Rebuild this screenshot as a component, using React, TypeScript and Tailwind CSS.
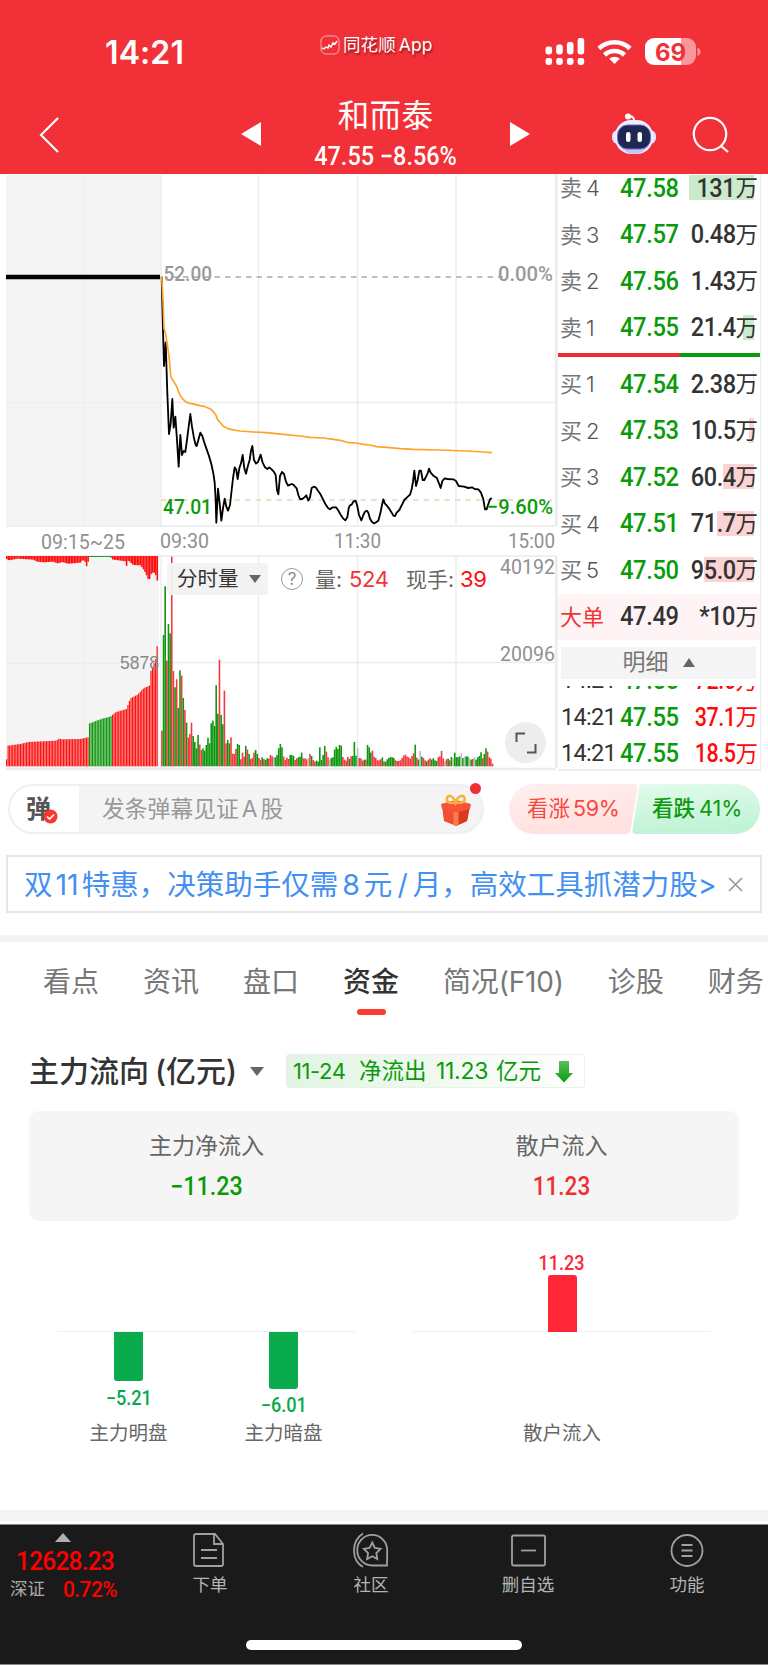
import { Fragment } from 'react'
import type { ReactNode } from 'react'
import clsx from 'clsx'

type Side = 'r' | 'g' | 'n'

const BAR_COLORS: Record<Side, string> = { r: '#f03c40', g: '#0f970f', n: '#bdbdbd' }

// 分时走势：上午 / 下午两段，单位 1/3 px
const PRICE_AM =
  '35,50 39,210 42,318 47,247 52,400 57,522 62,490 67,417 71,503 76,470 81,540 86,620 91,525 96,585 101,573 106,576 111,540 116,500 121,462 126,500 132,535 137,555 140,558 145,540 151,518 157,528 163,548 170,568 177,588 184,612 190,640 194,668 197,720 199,788 204,686 209,730 214,782 219,745 224,716 229,740 234,752 240,735 245,690 249,655 254,622 259,630 263,657 268,625 273,610 278,585 283,625 288,641 293,620 299,600 303,572 307,558 312,600 318,611 324,606 332,584 338,608 345,622 352,627 358,622 365,628 372,636 377,645 381,690 385,703 390,648 396,636 402,642 408,665 414,677 420,674 426,672 432,676 440,685 445,705 450,717 457,717 463,712 469,706 475,722 480,712 485,684 491,680 498,683 504,692 511,702 518,716 526,732 534,744 540,748 548,742 558,742 564,750 572,764 580,776 586,781 592,772 596,745 600,735'
const PRICE_PM =
  '30,315 35,314 40,305 47,302 52,318 57,345 64,361 70,345 75,335 80,332 85,338 90,356 96,366 102,370 108,367 115,362 121,340 126,315 130,298 134,310 140,316 147,325 155,338 160,347 165,348 170,338 178,330 186,314 193,300 201,292 210,284 215,268 219,245 223,212 228,258 233,240 238,212 243,212 248,240 253,240 258,230 263,220 267,206 272,218 280,227 290,233 296,248 302,264 307,243 314,235 322,237 340,238 348,243 356,258 372,260 385,264 396,262 404,267 415,268 423,278 430,298 435,328 440,328 444,315 450,298 455,294'
const AVG_AM =
  '35,50 39,120 42,205 47,222 52,255 57,290 60,320 62,348 66,357 73,367 80,380 85,393 92,409 101,420 110,427 120,430 135,433 150,437 165,440 180,446 190,455 198,466 204,481 212,489 220,499 232,505 245,509 270,513 310,516 350,518 400,523 450,528 480,532 520,534 550,538 575,542 590,547 600,548'
const AVG_PM =
  '30,128 50,129 70,133 90,135 110,140 140,142 180,146 220,148 300,150 380,153 430,156 456,158'

// 每分钟成交量，颜色 + 高度(1/3 px)
const VOLUMES =
  'r107 g394 g540 r317 g427 g399 r629 r286 g237 r261 g175 g288 r272 g205 r169 g131 r86 r97 r131 g91 g73 g54 g94 r65 r49 g54 g47 g64 g86 g69 g129 g137 g121 g243 g158 r320 g154 g126 r227 r69 g79 g69 r87 r38 r37 r52 g67 g64 r21 r41 r29 g61 r50 g37 r22 r25 r41 g49 g37 r25 r19 g27 r22 g19 g24 r23 r34 r30 n28 g27 g34 g54 g67 g57 r29 r19 r26 r22 g34 g34 g31 r19 r24 g27 g29 g41 r24 r24 r21 n25 r37 g31 r19 r14 g17 g14 g57 g19 g34 g61 r44 r27 n20 g25 g27 g50 g58 g52 g64 g62 r28 r20 r17 r28 g22 r30 g31 g73 g32 n54 r25 r24 r17 g20 r20 g64 g57 g41 r47 r29 r25 r18 r18 r21 g27 r15 g14 g21 g25 g28 g27 g25 r18 r16 r16 r18 r25 r32 r35 r29 r27 r23 r31 r39 g65 r26 g20 n46 g29 r25 r18 g15 r20 r24 g20 g24 g18 g16 r27 r30 r46 r24 n16 r21 g23 r18 g28 n24 g41 g28 g27 g30 n39 g25 n29 g30 g29 n24 g20 r22 n28 g20 g27 g31 g42 r24 g37 g54 r44 r27 r23 r8'
    .split(' ')
    .map((s) => ({ side: s[0] as Side, h: Number(s.slice(1)) / 3 }))

// 集合竞价关键点 [x, 高度]
const PRE_BOTTOM = [[6, 21], [7.5, 62], [20, 67], [28, 73], [56, 77], [58.6, 84], [60.5, 81], [80, 82], [87.5, 87], [88, 128], [92, 132], [97, 138], [103, 144], [110, 149], [111, 152], [115, 162], [126, 172], [128, 190], [130, 204], [137, 215], [143, 234], [149, 242], [150, 284], [153, 305], [155.5, 326], [156.6, 363], [159, 373]]
const PRE_TOP = [[6, 9], [8, 13], [17, 8], [33, 11], [36, 17], [43, 19], [52, 17], [57, 22], [62, 18], [67, 23], [80, 20], [82, 11], [85, 19], [86.5, 39], [88, 3], [110, 3], [111.5, 10], [118, 13], [125, 16], [125.7, 31], [127.5, 13], [132.5, 27], [140, 28], [144, 46], [148.3, 75], [150.5, 53], [153, 48], [155.3, 59], [157.5, 85]]

function sample(points: number[][], x: number) {
  for (let i = 1; i < points.length; i++) {
    const [x1, y1] = points[i]
    const [x0, y0] = points[i - 1]
    if (x <= x1) return (y0 + ((y1 - y0) * (x - x0)) / (x1 - x0)) / 3
  }
  return points[points.length - 1][1] / 3
}

const PRE_BARS = Array.from({ length: 99 }, (_, i) => 6 + i * 1.536)

const ASKS = [
  { label: '4', price: '47.58', vol: '131', bar: 'w-[65px]' },
  { label: '3', price: '47.57', vol: '0.48', bar: 'w-0' },
  { label: '2', price: '47.56', vol: '1.43', bar: 'w-0' },
  { label: '1', price: '47.55', vol: '21.4', bar: 'w-[11px]' },
]
const BIDS = [
  { label: '1', price: '47.54', vol: '2.38', bar: 'w-px' },
  { label: '2', price: '47.53', vol: '10.5', bar: 'w-[5px]' },
  { label: '3', price: '47.52', vol: '60.4', bar: 'w-[31px]' },
  { label: '4', price: '47.51', vol: '71.7', bar: 'w-[37px]' },
  { label: '5', price: '47.50', vol: '95.0', bar: 'w-[50px]' },
]
const TRADES = ['72.6', '37.1', '18.5']
const TABS = ['看点', '资讯', '盘口', '资金', '简况(F10)', '诊股', '财务']

function Label({ x, y, w, size = 21, fill = '#999', weight = 400, font = 'Roboto', children }: {
  x: number
  y: number
  w: number
  size?: number
  fill?: string
  weight?: number
  font?: string
  children: string
}) {
  return (
    <text x={x} y={y} textLength={w} lengthAdjust="spacingAndGlyphs" fontSize={size} fill={fill} fontWeight={weight} fontFamily={font}>
      {children}
    </text>
  )
}

function StatusBar() {
  return (
    <div className="flex h-[103px] items-start">
      <div className="ml-[105px] mt-[37px] w-[215px] font-[Inter] text-[32px] font-semibold leading-[32px] tracking-[0.1px]">14:21</div>
      <div className="mt-[33px] flex h-[24px] w-[225px] items-center gap-[3px]">
        <svg width="20" height="20" viewBox="0 0 20 20" fill="none" stroke="#fff">
          <rect x="1" y="1" width="18" height="18" rx="5" strokeOpacity=".6" />
          <path d="M2 13l2 1 2-2 2 1 1-3 2 2 2-4 2 1 2-3" strokeWidth="1.4" />
        </svg>
        <span className="text-[17.5px] leading-none tracking-[0.1px] [text-shadow:1px_2px_2px_rgba(90,0,0,0.6)]">同花顺<span className="ml-[3px]">App</span></span>
      </div>
      <svg className="mt-[38px]" width="158" height="28" viewBox="545 38 158 28" fill="#fff">
        {[0, 1, 2, 3].map((i) => (
          <Fragment key={i}>
            <rect x={545.5 + i * 10.7} y={[46.5, 44.5, 42, 38][i]} width="6.6" height={[8, 10, 12.5, 16.5][i]} rx="2.4" />
            <rect x={545.5 + i * 10.7} y="58" width="6.6" height="7" rx="2.4" />
          </Fragment>
        ))}
        <g fill="none" stroke="#fff" strokeWidth="4.6">
          <path d="M599 48.5a22.5 22.5 0 0 1 31 0" />
          <path d="M604.5 55a14.5 14.5 0 0 1 20 0" />
        </g>
        <path d="M614.5 64l-5.3-5.2a7.6 7.6 0 0 1 10.6 0z" />
        <path d="M654 38h27v27h-27a9 9 0 0 1-9-9v-9a9 9 0 0 1 9-9z" />
        <path d="M681 38h6a9 9 0 0 1 9 9v9a9 9 0 0 1-9 9h-6z" fillOpacity=".5" />
        <path d="M697.5 47.500c4 1.500 4 7 0 8.500z" fillOpacity=".5" />
        <text x="655" y="60.500" textLength="31" fontSize="24" fontWeight="700" fontFamily="Inter" fill="#f23038">69</text>
      </svg>
    </div>
  )
}

function TitleBar() {
  return (
    <div className="flex h-[71px] items-start">
      <svg className="ml-[38px] mt-[12px]" width="22" height="40" viewBox="0 0 22 40" fill="none" stroke="#fff" strokeWidth="2.2">
        <path d="M20 3L3 20l17 17" />
      </svg>
      <svg className="ml-[181px] mt-[19px]" width="20" height="24" fill="#fff"><path d="M20 0v24L0 12z" /></svg>
      <div className="flex w-[249px] flex-col items-center">
        <h1 className="mt-[-4px] text-[31.5px] leading-[34px] tracking-[0.3px]">和而泰</h1>
        <div className="mt-[10px] scale-x-92 whitespace-pre font-[Roboto] text-[25.5px] font-medium leading-[26px]">47.55 −8.56%</div>
      </div>
      <svg className="mt-[19px]" width="20" height="24" fill="#fff"><path d="M0 0v24l20-12z" /></svg>
      <svg className="ml-[82px] mt-[10px]" width="44" height="42" viewBox="0 0 44 42">
        <path d="M16 3.500q7-1 6 6" fill="none" stroke="#f4f6ff" strokeWidth="2.200" />
        <circle cx="16" cy="3.500" r="3" fill="#fff" />
        <rect x="0" y="17" width="44" height="14" rx="6" fill="#dfe5fb" />
        <rect x="3" y="7" width="38" height="34" rx="16" fill="#eceffd" />
        <path d="M7 32q6 9 15 9t15-9z" fill="#c3c7ee" />
        <rect x="5.500" y="12" width="33" height="24" rx="10" fill="#1f2850" stroke="#7b62d9" strokeWidth="1" />
        <rect x="14" y="19" width="4.500" height="10" rx="2.200" fill="#fff" />
        <rect x="25.500" y="19" width="4.500" height="10" rx="2.200" fill="#fff" />
      </svg>
      <svg className="ml-[36px] mt-[13px]" width="38" height="38" viewBox="0 0 38 38" fill="none" stroke="#fff" strokeWidth="2.2">
        <circle cx="18" cy="18" r="16.200" />
        <path d="M28.500 29.500L36 36" />
      </svg>
    </div>
  )
}

function TrendChart() {
  return (
    <svg className="block" width="558" height="597" viewBox="0 174 558 597">
      <rect x="6" y="175" width="155" height="350" fill="#f4f4f4" />
      <rect x="6" y="556" width="153" height="212" fill="#f4f4f4" />
      <g stroke="#ececec" strokeWidth="1.300">
        <path d="M161 175v351M258.500 175v351M357.500 175v351M456 175v351M161 402.500h395M6 526h550" />
        <path d="M161 556v212M258.500 556v212M357.500 556v212M456 556v212M161 662.500h395M6 556h550" />
        <path d="M84 175v351M6 402.500h155M84 556v212M6 663.500h155" strokeDasharray="2 2" strokeWidth="1" stroke="#e8e8e8" />
      </g>
      <path d="M556.300 174v352M556.300 556v212M6 769h550" stroke="#ececec" strokeWidth="2.500" />
      <path d="M165 277h338" stroke="#aaa" strokeWidth="1.600" strokeDasharray="5.500 5" strokeDashoffset="3" />
      <path d="M161 500h391" stroke="#ecd3b4" strokeWidth="1.500" strokeDasharray="5.500 5" />
      <path d="M6 277h154" stroke="#000" strokeWidth="4.600" />
      <g fill="none" strokeLinejoin="round" strokeWidth="5.500">
        <g transform="translate(150 260) scale(.33333)">
          <polyline points={PRICE_AM} stroke="#000" />
          <polyline points={AVG_AM} stroke="#ffa326" strokeWidth="5" />
        </g>
        <g transform="translate(340 400) scale(.33333)">
          <polyline points={PRICE_PM} stroke="#000" />
          <polyline points={AVG_PM} stroke="#ffa326" strokeWidth="5" />
        </g>
      </g>
      <Label x={163.500} y={281} w={48.500} weight={500}>52.00</Label>
      <Label x={498} y={281} w={55} weight={500}>0.00%</Label>
      <Label x={163} y={514} w={49} fill="#0a9b0a" weight={500}>47.01</Label>
      <Label x={487} y={514} w={66} fill="#0a9b0a" weight={500}>−9.60%</Label>

      <Label x={41} y={549} w={84} fill="#909090">09:15~25</Label>
      <Label x={160} y={547.500} w={49} fill="#909090">09:30</Label>
      <Label x={334} y={547.500} w={47} fill="#909090">11:30</Label>
      <Label x={508} y={547.500} w={47} fill="#909090">15:00</Label>

      {PRE_BARS.map((x) => {
        const green = x > 87.500 && x < 111
        const top = sample(PRE_TOP, x)
        const h = sample(PRE_BOTTOM, x)
        const fill = green ? '#109710' : x > 157.500 ? '#aaa' : '#ff1010'
        return (
          <g key={x} fill={fill}>
            <rect x={x} y={556} width={1.536} height={top} fill={x > 157.500 ? '#ff1010' : fill} />
            <rect x={x} y={766.300 - h} width={1.200} height={h} />
          </g>
        )
      })}
      {VOLUMES.map((v, i) => (
        <rect key={i} x={161.100 + i * 1.645} y={766.300 - v.h} width={1.600} height={v.h} fill={BAR_COLORS[v.side]} />
      ))}
      <Label x={120} y={669} w={39} size={17.500} fill="#888" font="Liberation Sans">5878</Label>
      <Label x={500} y={573.500} w={55} fill="#909090">40192</Label>
      <Label x={500} y={661} w={55} fill="#909090">20096</Label>
    </svg>
  )
}

function QuotePane() {
  return (
    <div className="relative w-[558px] shrink-0">
      <TrendChart />
      <div className="absolute left-[167px] top-[389px] flex h-[32px] items-center text-[21px] leading-none text-[#666]">
        <div className="flex h-[32px] w-[101px] items-center gap-[11px] rounded-[3px] bg-[#f2f2f2]/95 pl-[10px] text-[#333]">
          <span className="w-[64px] text-[20.5px]">分时量</span>
          <svg className="ml-[-3px]" width="12" height="8" fill="#666"><path d="M0 0h12L6 8z" /></svg>
        </div>
        <span className="ml-[13px] flex size-[22px] items-center justify-center rounded-full border-[1.5px] border-[#999] text-[17px] text-[#888]">?</span>
        <span className="ml-[12px] w-[34px]">量:</span>
        <span className="w-[57px] font-[Inter] text-[22px] tracking-[-0.4px] text-[#f03538]">524</span>
        <span className="w-[54px]">现手:</span>
        <span className="font-[Inter] text-[22px] tracking-[-0.4px] text-[#ff0a0a]">39</span>
      </div>
      <div className="absolute left-[505px] top-[548px] flex size-[41px] items-center justify-center rounded-full bg-[#ededed]">
        <svg width="22" height="22" fill="none" stroke="#555" strokeWidth="2"><path d="M10 1.500H1.500V10M12 20.500h8.500V12" /></svg>
      </div>
    </div>
  )
}

function Price({ children, className }: { children: ReactNode; className: string }) {
  return <span className={clsx('inline-block origin-left scale-x-95 font-[Roboto] text-[25px] font-medium tracking-[-0.4px]', className)}>{children}</span>
}

function BookRow({ kind, row }: { kind: '卖' | '买'; row: (typeof ASKS)[number] }) {
  return (
    <div className="relative flex h-[46.500px] shrink-0 items-center pl-[2px] leading-none">
      <div className={clsx('absolute right-[6px] top-[10px] h-[25px]', row.bar, kind === '卖' ? 'bg-[#cbeacb]' : 'bg-[#fbd3d4]')} />
      <span className="w-[26px] text-[22px] text-[#777]">{kind}</span>
      <span className="w-[34px] font-[Inter] text-[22px] font-light text-[#555]">{row.label}</span>
      <Price className="text-[#0a9b0a]">{row.price}</Price>
      <Volume value={row.vol} className="text-[#333]" />
    </div>
  )
}

function Volume({ value, className, narrow }: { value: string; className?: string; narrow?: boolean }) {
  return (
    <span className={clsx('absolute right-[2px] flex items-center leading-none', className)}>
      <span className={clsx('inline-block origin-right font-[Roboto] text-[25px] tracking-[-0.5px]', narrow ? 'scale-x-86 font-medium' : 'scale-x-94 font-medium')}>{value}</span>
      <span className="text-[22.5px]">万</span>
    </span>
  )
}

function OrderBook() {
  return (
    <div className="flex h-[597px] w-[203px] flex-col overflow-hidden border-b-2 border-r border-[#ececec]">
      <div className="mt-[-9px]">
        {ASKS.map((row) => <BookRow key={row.label} kind="卖" row={row} />)}
      </div>
      <div className="mt-[2px] flex h-[3.500px] shrink-0">
        <div className="w-[122px] bg-[#f02c30]" />
        <div className="flex-1 bg-[#0a9b0a]" />
      </div>
      <div className="mt-[4.500px]">
        {BIDS.map((row) => <BookRow key={row.label} kind="买" row={row} />)}
      </div>
      <div className="relative flex h-[46.500px] shrink-0 items-center bg-[#fff4f5] pl-[2px] leading-none">
        <span className="w-[60px] text-[22px] text-[#f03538]">大单</span>
        <Price className="text-[#333]">47.49</Price>
        <Volume value="*10" className="text-[#333]" />
      </div>
      <div className="ml-[3px] mr-[4px] mt-[6.500px] flex h-[32px] shrink-0 items-center justify-center gap-[14px] bg-[#f4f4f4] text-[23px] leading-none text-[#777]">
        明细
        <svg width="12" height="9" fill="#666"><path d="M0 9h12L6 0z" /></svg>
      </div>
      <div className="mt-[7px] flex flex-1 flex-col justify-end overflow-hidden">
        {TRADES.map((vol) => (
          <div key={vol} className="relative flex h-[36.500px] shrink-0 items-center pl-[3px] leading-none last:mb-[-3px]">
            <span className="w-[59px] font-[Roboto] text-[23.500px] tracking-[-0.7px] text-[#333]">14:21</span>
            <Price className="text-[#0a9b0a]">47.55</Price>
            <Volume value={vol} narrow className="text-[#ff0a0a]" />
          </div>
        ))}
      </div>
    </div>
  )
}

function Gift() {
  return (
    <svg width="32" height="34" viewBox="0 0 32 34">
      <path d="M2 13l14-4 14 4-3 15-11 5L4 28z" fill="#f0502f" />
      <path d="M16 17v16l11-5 3-15z" fill="#d93a20" />
      <path d="M1 11l15-4 15 4-1 5-14 4-14-4z" fill="#f6533a" />
      <path d="M13.500 19.300h5V32L16 33l-2.500-1z" fill="#ff7a4c" />
      <path d="M15.500 9.500C9 11 6 8.500 7 5s6-3 8.500 4.500C18 2 23.500 1.500 24.500 5s-2.500 6-9 4.500z" fill="none" stroke="#f5b23c" strokeWidth="2.600" />
    </svg>
  )
}

function CommentBar() {
  return (
    <div className="mt-[13px] flex h-[50px] items-center">
      <div className="relative ml-[8px] flex h-[50px] w-[476px] items-center rounded-full border-2 border-[#efefef] bg-[#f4f4f4]">
        <div className="relative flex h-full w-[69px] items-center rounded-l-full bg-white pl-[16px] text-[25px] font-bold leading-none text-[#555]">
          弹
          <svg className="absolute left-[33px] top-[23px]" width="15" height="15" viewBox="0 0 15 15">
            <circle cx="7.500" cy="7.500" r="7" fill="#f8382f" />
            <path d="M4 7.500l2.600 2.600L11 5.500" fill="none" stroke="#fff" strokeWidth="1.600" />
          </svg>
        </div>
        <span className="ml-[23px] mt-px text-[22.800px] leading-none text-[#999]">发条弹幕见证<span className="mx-[3px]">A</span>股</span>
        <div className="absolute left-[430px] top-[7px]"><Gift /></div>
        <div className="absolute left-[460px] top-[-3px] size-[11px] rounded-full bg-[#ee2f34]" />
      </div>
      <div className="relative ml-[25px] h-[50px] w-[251px]">
        <svg className="block" width="251" height="50" viewBox="0 0 251 50">
          <defs>
            <linearGradient id="up" x2="0.300" y2="1"><stop stopColor="#fff0ef" /><stop offset="1" stopColor="#ffe1df" /></linearGradient>
            <linearGradient id="down" x2="0.200" y2="1"><stop stopColor="#e2fbec" /><stop offset="1" stopColor="#c0f3d6" /></linearGradient>
          </defs>
          <path d="M25 0h100q4 0 3.500 4l-7 42q-.8 4-4.500 4H25a25 25 0 0 1 0-50z" fill="url(#up)" />
          <path d="M134 0h92a25 25 0 0 1 0 50H127q-4 0-3.500-4l6.500-42q.8-4 4-4z" fill="url(#down)" />
        </svg>
        <div className="absolute inset-0 flex items-center text-[21.500px] leading-none">
          <span className="ml-[18px] w-[125px] text-[#fb4640]">看涨<span className="ml-[3px] font-[Inter] tracking-[-0.3px]">59%</span></span>
          <span className="font-medium text-[#0a9b0a]">看跌<span className="ml-[4px] font-[Inter] font-normal">41%</span></span>
        </div>
      </div>
    </div>
  )
}

function Banner() {
  return (
    <div className="mx-[6px] mt-[21px] flex h-[58px] items-center border-2 border-[#e6e6e6] pl-[16px] text-[28.500px] leading-none text-[#438ff2]">
      <span className="mt-[2px] w-[704px] whitespace-nowrap">双<span className="mx-[3px]">11</span>特惠，决策助手仅需<span className="mx-[4px]">8</span>元<span className="mx-[5px]">/</span>月，高效工具抓潜力股&gt;</span>
      <svg width="15" height="15" stroke="#999" strokeWidth="1.700"><path d="M1 1l13 13M14 1L1 14" /></svg>
    </div>
  )
}

function FlowBar({ children, label, className }: { children: ReactNode; label: string; className?: string }) {
  return (
    <div className={clsx('relative flex flex-col items-center', className)}>
      {children}
      <span className="absolute top-[172px] whitespace-nowrap text-[19.500px] font-normal leading-[24px] text-[#666]">{label}</span>
    </div>
  )
}

function FundFlow() {
  return (
    <section>
      <div className="mt-[35px] flex h-[36px] items-center">
        <h2 className="ml-[29px] w-[221px] whitespace-nowrap text-[30px] font-medium leading-none text-[#333]">主力流向<span className="ml-[6px]">(亿元)</span></h2>
        <svg width="14" height="9" fill="#666"><path d="M0 0h14L7 9z" /></svg>
        <div className="ml-[22px] flex h-[34px] w-[299px] items-center rounded-[3px] border border-[#e6f4e6] bg-gradient-to-r from-[#e2f3e3] to-white pl-[6px] text-[22.500px] leading-none text-[#0a9b0a]">
          <div className="flex w-[262px] items-center whitespace-nowrap">
            <span className="w-[66px] font-[Inter] text-[22px] tracking-[-0.4px]">11-24</span>
            <span className="w-[77px]">净流出</span>
            <span className="w-[60px] font-[Inter] text-[23px] tracking-[-0.3px]">11.23</span>
            <span>亿元</span>
          </div>
          <svg width="18" height="23"><defs><linearGradient id="arr" x2="0" y2="1"><stop stopColor="#5cc05c" /><stop offset="1" stopColor="#0a9b0a" /></linearGradient></defs><path d="M4 1h10v12h4l-9 9.500L0 13h4z" fill="url(#arr)" /></svg>
        </div>
      </div>
      <div className="mx-[29px] mt-[22px] grid h-[110px] grid-cols-2 rounded-[10px] bg-[#f5f5f5] text-center leading-none">
        <div className="pt-[23px]">
          <div className="text-[23px] leading-[24px] text-[#666]">主力净流入</div>
          <div className="mt-[16px] scale-x-93 font-[Roboto] text-[25px] font-medium leading-[26px] text-[#0a9b0a]">−11.23</div>
        </div>
        <div className="pt-[23px]">
          <div className="text-[23px] leading-[24px] text-[#666]">散户流入</div>
          <div className="mt-[16px] scale-x-90 font-[Roboto] text-[25px] font-medium leading-[26px] text-[#f02f33]">11.23</div>
        </div>
      </div>
      <div className="mx-[57px] mt-[29px] grid h-[260px] grid-cols-[299px_298px] gap-[57px] text-[19px] font-medium leading-[20px]">
        <div className="relative grid grid-cols-[143px_167px] font-['Roboto','Noto_Sans_CJK_SC',sans-serif] text-[#09a94b]">
          <div className="absolute left-0 top-[81px] h-px w-full bg-[#f0f0f0]" />
          <FlowBar label="主力明盘">
            <div className="relative mt-[82px] h-[49px] w-[29px] rounded-b-[3px] bg-[#09ab4c]" />
            <span className="mt-[8px] scale-x-93 text-[19.500px]">−5.21</span>
          </FlowBar>
          <FlowBar label="主力暗盘">
            <div className="relative mt-[82px] h-[57px] w-[29px] rounded-b-[3px] bg-[#09ab4c]" />
            <span className="mt-[7px] scale-x-93 text-[19.500px]">−6.01</span>
          </FlowBar>
        </div>
        <div className="relative font-['Roboto','Noto_Sans_CJK_SC',sans-serif] text-[#ff2638]">
          <div className="absolute left-0 top-[81px] h-px w-full bg-[#f0f0f0]" />
          <FlowBar label="散户流入">
            <span className="mt-[3px] scale-x-90 text-[20px]">11.23</span>
            <div className="relative mt-[2px] h-[57px] w-[29px] rounded-t-[3px] bg-[#ff2638]" />
          </FlowBar>
        </div>
      </div>
    </section>
  )
}

function NavItem({ label, className, children }: { label: string; className?: string; children: ReactNode }) {
  return (
    <div className={clsx('flex flex-col items-center', className)}>
      <svg width="36" height="36" viewBox="0 0 36 36" fill="none" stroke="#a0a0a0" strokeWidth="1.800">{children}</svg>
      <span className="mt-[7px] whitespace-nowrap text-[17.500px] leading-[20px] text-[#b4b4b4]">{label}</span>
    </div>
  )
}

function BottomNav() {
  return (
    <nav className="h-[141px] border-y-[1.500px] border-[#8a8a8a] bg-[#1a1a1a]">
      <div className="flex h-[115px] items-start">
        <div className="w-[130px] shrink-0 pt-[8px]">
          <svg className="ml-[55px]" width="16" height="9" fill="#b0b0b0"><path d="M0 9h16L8 0z" /></svg>
          <div className="ml-[16px] mt-[6px] origin-left scale-x-94 font-[Roboto] text-[26px] font-medium leading-[26px] tracking-[-0.8px] text-[#f00]">12628.23</div>
          <div className="ml-[10px] mt-[3px] flex items-center leading-[24px]">
            <span className="w-[53px] text-[17.500px] text-[#aaa]">深证</span>
            <span className="origin-left scale-x-93 font-[Roboto] text-[22.500px] font-medium tracking-[-0.6px] text-[#f00]">0.72%</span>
          </div>
        </div>
        <NavItem label="下单" className="ml-[20px] w-[120px] pt-[7px]">
          <path d="M4 2h19l8 10v20q0 2-2 2H4q-2 0-2-2V4q0-2 2-2z M22 2v10h9 M9 18h16 M9 26h16" />
        </NavItem>
        <NavItem label="社区" className="ml-[41px] w-[120px] pt-[7px]">
          <path d="M34 33.500H19.500A15 15.300 0 1 1 34.200 18.500z M10 1.500C-2 9 -2 28 10 35" />
          <path d="M19.200 10.500l2.600 5.500 5.700.8-4.200 4.300 1 6-5.100-2.800-5.100 2.800 1-6-4.200-4.300 5.700-.8z" />
        </NavItem>
        <NavItem label="删自选" className="ml-[37px] w-[120px] pt-[7px]">
          <rect x="2" y="3.500" width="33" height="30" rx="1.500" />
          <path d="M11 18.500h15" />
        </NavItem>
        <NavItem label="功能" className="ml-[39px] w-[120px] pt-[7px]">
          <circle cx="18" cy="18.500" r="15.500" />
          <path d="M12.500 13h11M12.500 18.500h11M12.500 24h11" />
        </NavItem>
      </div>
      <div className="mx-auto h-[10px] w-[276px] rounded-full bg-white" />
    </nav>
  )
}

export default function App() {
  return (
    <div className="h-[1665px] w-[768px] overflow-hidden bg-white font-['Inter','Noto_Sans_CJK_SC',sans-serif]">
      <header className="h-[174px] bg-[#f23038] text-white">
        <StatusBar />
        <TitleBar />
      </header>
      <div className="flex h-[597px]">
        <QuotePane />
        <OrderBook />
      </div>
      <CommentBar />
      <Banner />
      <div className="mt-[22px] h-[7px] bg-[#f4f4f4]" />
      <div className="flex h-[76px] gap-[44px] overflow-hidden pl-[43px] text-[28px] leading-[32px] text-[#777]">
        {TABS.map((tab) => (
          <div key={tab} className={clsx('flex shrink-0 flex-col items-center whitespace-nowrap pt-[24px]', tab === '资金' && 'font-medium text-[#333]', tab === '简况(F10)' && 'tracking-[-0.2px]')}>
            {tab}
            {tab === '资金' && <div className="mt-[11px] h-[6px] w-[29px] rounded-full bg-[#fb3a30]" />}
          </div>
        ))}
      </div>
      <FundFlow />
      <div className="h-[11px] bg-[#f4f4f4]" />
      <div className="h-[3px]" />
      <BottomNav />
    </div>
  )
}
